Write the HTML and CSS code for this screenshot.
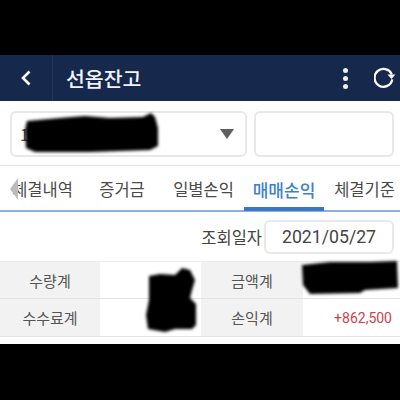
FILE: index.html
```html
<!DOCTYPE html>
<html lang="ko">
<head>
    <meta charset="UTF-8">
    <meta name="viewport" content="width=device-width, initial-scale=1.0">
    <title>선옵잔고</title>
    <link rel="stylesheet" href="styles.css">
</head>
<body>
    <div class="screen">
        <header class="header">
            <div class="back">
                <svg width="14" height="18" viewBox="0 0 14 18"><path d="M10.5 2.5 4 9l6.500 6.500" fill="none" stroke="#fff" stroke-width="2.600"/></svg>
            </div>
            <h1>선옵잔고</h1>
            <div class="more"><i></i><i></i><i></i></div>
            <svg class="refresh" width="22" height="22" viewBox="3 2.500 20.500 20.500">
                <path d="M19.500 9.500A8.300 8.300 0 1 0 20 14" fill="none" stroke="#fff" stroke-width="2.200"/>
                <path d="M15.500 9.500h7.500l-3.700 4.200z" fill="#fff"/>
            </svg>
        </header>

        <div class="selects">
            <div class="box account">
                <span>1</span>
                <b class="arrow"></b>
            </div>
            <div class="box extra"></div>
        </div>

        <nav class="tabs">
            <a>체결내역</a>
            <a>증거금</a>
            <a>일별손익</a>
            <a class="on">매매손익</a>
            <a>체결기준</a>
            <b class="left-arrow"></b>
        </nav>

        <div class="date-row">
            <span>조회일자</span>
            <div class="date">2021/05/27</div>
        </div>

        <div class="summary">
            <div class="th">수량계</div>
            <div class="td"></div>
            <div class="th">금액계</div>
            <div class="td"></div>
            <div class="th">수수료계</div>
            <div class="td"></div>
            <div class="th">손익계</div>
            <div class="td red">+862,500</div>
        </div>

        <!-- 가림 표시 -->
        <svg class="scribble" width="400" height="400" viewBox="0 0 400 400">
            <g filter="url(#soft)">
                <path d="M27 121 60 118 85 116 110 118 143 117 151 113 155 117 158 128 158 146 150 150 90 152 35 152 26 148 25 130z"/>
                <path d="M149 276 160 274 175 275 182 268 190 270 195 280 192 290 190 298 196 304 196 325 192 329 175 329 165 332 148 329 146 315 149 300z"/>
                <path d="M302 265 330 262 370 262 397 261 398 288 365 290 360 293 310 294 303 285z"/>
            </g>
            <defs><filter id="soft"><feGaussianBlur stdDeviation="1.500"/></filter></defs>
        </svg>
    </div>
</body>
</html>
```

FILE: styles.css
```css
*{
    margin: 0;
    padding: 0;
    box-sizing: border-box;
}
body{
    width: 400px;
    height: 400px;
    overflow: hidden;
    background-color: #000;
    font-family: "Noto Sans CJK KR", "Noto Sans", sans-serif;
    color: #444;
}
.screen{
    position: relative;
    width: 400px;
    height: 400px;
    padding-top: 55px;
}
.header{
    height: 46px;
    display: flex;
    align-items: center;
    background-color: #16294d;
    color: #fff;
}
.back{
    width: 53px;
    height: 100%;
    display: flex;
    align-items: center;
    justify-content: center;
    border-right: 1px solid #22365c;
}
.header h1{
    flex: 1;
    margin-left: 13px;
    font-size: 20.500px;
    font-weight: 500;
    color: #f1f3f6;
}
.more{
    display: flex;
    flex-direction: column;
    gap: 3px;
    margin-right: 26px;
}
.more i{
    width: 5px;
    height: 5px;
    border-radius: 50%;
    background-color: #eee;
}
.refresh{
    margin-right: 4px;
}
.selects{
    height: 65px;
    display: flex;
    gap: 7px;
    padding: 10px 6px 8px 10px;
    background-color: #fff;
    border-bottom: 1px solid #e2e2e2;
}
.box{
    border: 2px solid #e8e8e8;
    border-radius: 6px;
    background-color: #fff;
}
.account{
    width: 237px;
    display: flex;
    align-items: center;
    justify-content: space-between;
    padding: 0 11px 0 8px;
    font-size: 16px;
}
.extra{
    width: 140px;
}
.arrow{
    width: 0;
    height: 0;
    border-left: 7px solid transparent;
    border-right: 7px solid transparent;
    border-top: 10px solid #5f5f5f;
}
.tabs{
    position: relative;
    height: 46px;
    display: flex;
    align-items: flex-start;
    background-color: #fff;
    border-bottom: 2px solid #8eb0de;
    font-size: 16.500px;
}
.tabs a{
    height: 45px;
    line-height: 47px;
    text-align: center;
    white-space: nowrap;
    color: #4a4a4a;
}
.tabs a:nth-child(1){ width: 85px; }
.tabs a:nth-child(2){ width: 74px; }
.tabs a:nth-child(3){ width: 85px; padding-left: 4px; }
.tabs a:nth-child(4){ width: 80px; }
.tabs a:nth-child(5){ width: 76px; padding-left: 5px; }
.tabs a.on{
    color: #3d80cb;
    font-size: 17px;
    font-weight: 500;
    border-bottom: 4px solid #3a76c2;
}
.left-arrow{
    position: absolute;
    left: 10px;
    top: 12px;
    width: 0;
    height: 0;
    border-top: 11px solid transparent;
    border-bottom: 11px solid transparent;
    border-right: 8px solid #bcbcbc;
}
.date-row{
    height: 49px;
    display: flex;
    align-items: center;
    justify-content: flex-end;
    gap: 2px;
    padding-right: 6px;
    background-color: #fff;
    font-size: 16.500px;
}
.date{
    width: 130px;
    height: 34px;
    line-height: 31px;
    text-align: center;
    border: 2px solid #e9e9e9;
    border-radius: 6px;
    font-family: "Roboto", sans-serif;
    font-size: 17.700px;
}
.summary{
    height: 83px;
    display: grid;
    grid-template-columns: 100px 101px 102px 97px;
    grid-template-rows: 37px 38px;
    background-color: #fff;
    border-top: 1px solid #ececec;
    font-size: 15px;
}
.summary > div{
    display: flex;
    align-items: center;
    justify-content: center;
    border-bottom: 1px solid #e4e4e4;
}
.summary .th{
    background-color: #f2f2f2;
    color: #555;
}
.summary .red{
    justify-content: flex-end;
    padding-right: 8px;
    color: #c8434b;
    font-family: "Roboto", sans-serif;
    font-size: 14px;
}
.scribble{
    position: absolute;
    left: 0;
    top: 0;
}
```
